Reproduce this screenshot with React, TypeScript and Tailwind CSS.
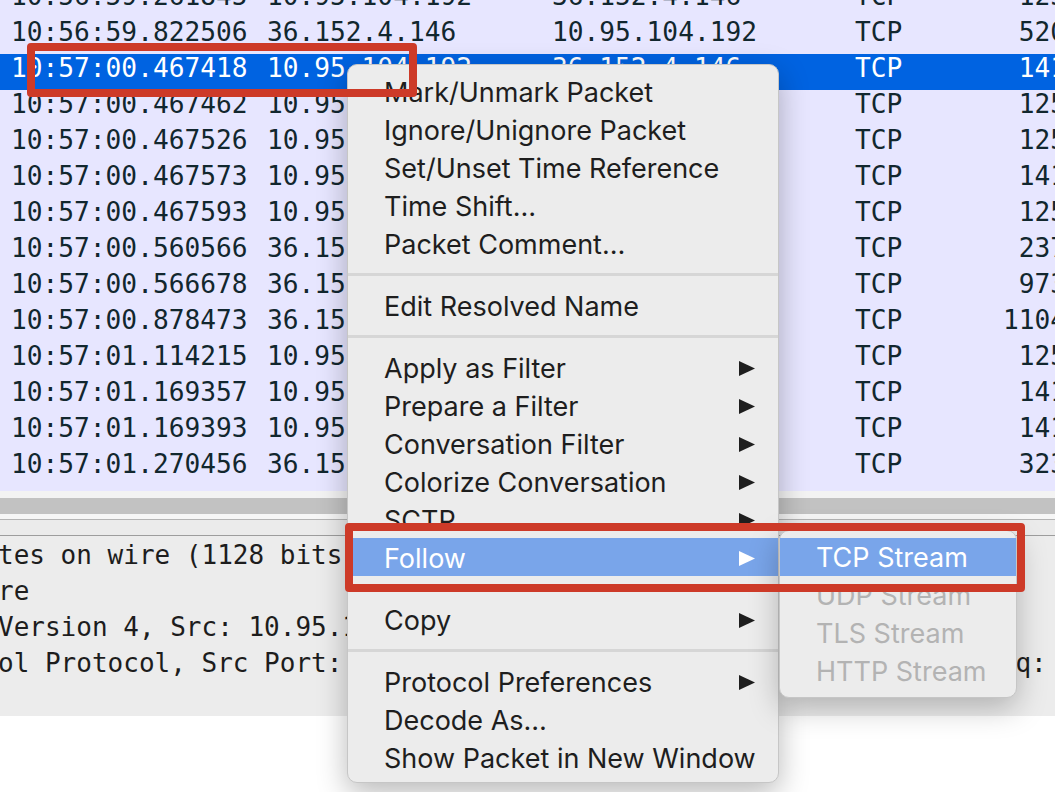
import React from 'react';

type Packet = {
  time: string;
  src: string;
  dst: string;
  proto: string;
  len: string;
  selected?: boolean;
};

const A = '10.95.104.192';
const B = '36.152.4.146';

const packets: Packet[] = [
  { time: '10:56:59.261845', src: A, dst: B, proto: 'TCP', len: '125' },
  { time: '10:56:59.822506', src: B, dst: A, proto: 'TCP', len: '520' },
  { time: '10:57:00.467418', src: A, dst: B, proto: 'TCP', len: '141', selected: true },
  { time: '10:57:00.467462', src: A, dst: B, proto: 'TCP', len: '125' },
  { time: '10:57:00.467526', src: A, dst: B, proto: 'TCP', len: '125' },
  { time: '10:57:00.467573', src: A, dst: B, proto: 'TCP', len: '141' },
  { time: '10:57:00.467593', src: A, dst: B, proto: 'TCP', len: '125' },
  { time: '10:57:00.560566', src: B, dst: A, proto: 'TCP', len: '237' },
  { time: '10:57:00.566678', src: B, dst: A, proto: 'TCP', len: '973' },
  { time: '10:57:00.878473', src: B, dst: A, proto: 'TCP', len: '1104' },
  { time: '10:57:01.114215', src: A, dst: B, proto: 'TCP', len: '125' },
  { time: '10:57:01.169357', src: A, dst: B, proto: 'TCP', len: '141' },
  { time: '10:57:01.169393', src: A, dst: B, proto: 'TCP', len: '141' },
  { time: '10:57:01.270456', src: B, dst: A, proto: 'TCP', len: '323' },
];

const details = [
  'tes on wire (1128 bits), 141 bytes captured (1128 bits)',
  're',
  'Version 4, Src: 10.95.104.192, Dst: 36.152.4.146',
  'ol Protocol, Src Port: 5821, Dst Port: 443, [Stream index: 0], Seq: 1',
];

type MenuEntry =
  | { kind: 'sep' }
  | { kind: 'item'; label: string; sub?: boolean; active?: boolean };

const menu: MenuEntry[] = [
  { kind: 'item', label: 'Mark/Unmark Packet' },
  { kind: 'item', label: 'Ignore/Unignore Packet' },
  { kind: 'item', label: 'Set/Unset Time Reference' },
  { kind: 'item', label: 'Time Shift…' },
  { kind: 'item', label: 'Packet Comment…' },
  { kind: 'sep' },
  { kind: 'item', label: 'Edit Resolved Name' },
  { kind: 'sep' },
  { kind: 'item', label: 'Apply as Filter', sub: true },
  { kind: 'item', label: 'Prepare a Filter', sub: true },
  { kind: 'item', label: 'Conversation Filter', sub: true },
  { kind: 'item', label: 'Colorize Conversation', sub: true },
  { kind: 'item', label: 'SCTP', sub: true },
  { kind: 'item', label: 'Follow', sub: true, active: true },
  { kind: 'sep' },
  { kind: 'item', label: 'Copy', sub: true },
  { kind: 'sep' },
  { kind: 'item', label: 'Protocol Preferences', sub: true },
  { kind: 'item', label: 'Decode As…' },
  { kind: 'item', label: 'Show Packet in New Window' },
];

const followItems = [
  { label: 'TCP Stream', active: true },
  { label: 'UDP Stream', disabled: true },
  { label: 'TLS Stream', disabled: true },
  { label: 'HTTP Stream', disabled: true },
];

function Arrow({ white }: { white?: boolean }) {
  return (
    <svg width="16" height="15" viewBox="0 0 16 15" className="shrink-0 -mt-[2px]">
      <polygon points="0,0 16,7.5 0,15" fill={white ? '#ffffff' : '#1e1e1e'} />
    </svg>
  );
}

export default function App() {
  return (
    <div className="relative w-[1055px] h-[792px] overflow-hidden bg-white">
      {/* packet list */}
      <div className="h-[491px] overflow-hidden bg-[#e7e6ff] font-['DejaVu_Sans_Mono',monospace] text-[26.2px]">
        <div className="-mt-[18px]">
          {packets.map(p => (
            <div
              key={p.time}
              className={`flex h-[36px] leading-[29px] pl-[11px] whitespace-nowrap ${
                p.selected ? 'bg-[#0063e1] text-white' : 'text-[#12272e]'
              }`}
            >
              <span className="w-[256px] shrink-0">{p.time}</span>
              <span className="w-[285px] shrink-0">{p.src}</span>
              <span className="w-[303px] shrink-0">{p.dst}</span>
              <span className="w-[120px] shrink-0">{p.proto}</span>
              <span className="w-[91px] shrink-0 text-right">{p.len}</span>
            </div>
          ))}
        </div>
      </div>

      {/* horizontal scrollbar + splitter */}
      <div className="h-[7px] bg-[#f3f3f3]" />
      <div className="h-[16px] bg-[#c2c2c2]" />
      <div className="h-[5px] bg-[#f6f6f6]" />
      <div className="h-px bg-[#b4b4b4]" />
      <div className="h-[15px] bg-[#ebebeb]" />
      <div className="h-px bg-[#9d9d9d]" />

      {/* packet details */}
      <div className="h-[180px] pt-[1px] bg-[#ececec] font-['DejaVu_Sans_Mono',monospace] text-[26px] text-[#1d1d1d]">
        {details.map(d => (
          <div key={d} className="h-[36px] leading-[36px] -ml-[2px] whitespace-nowrap">
            {d}
          </div>
        ))}
      </div>

      {/* context menu */}
      <div className="absolute left-[347px] top-[64px] w-[432px] pt-[7px] pb-[6px] rounded-[10px] bg-[#ececec] border border-[#c6c6c6] shadow-[0_10px_30px_rgba(0,0,0,0.28)] font-['Inter',sans-serif] text-[27px] text-[#1e1e1e]">
        {menu.map((m, i) =>
          m.kind === 'sep' ? (
            <div key={i} className="h-[24px] flex items-center">
              <div className="h-[3px] w-full bg-[#d6d6d6]" />
            </div>
          ) : (
            <div
              key={i}
              className={`h-[38px] flex items-center justify-between pt-[4px] pl-[36px] pr-[23px] ${
                m.active ? 'bg-[#79a5ea] text-white' : ''
              }`}
            >
              <span className="whitespace-nowrap">{m.label}</span>
              {m.sub && <Arrow white={m.active} />}
            </div>
          )
        )}
      </div>

      {/* Follow submenu */}
      <div className="absolute left-[779px] top-[530px] w-[238px] pt-[7px] pb-[7px] rounded-[10px] bg-[#ececec] border border-[#c6c6c6] shadow-[0_10px_30px_rgba(0,0,0,0.25)] font-['Inter',sans-serif] text-[27px]">
        {followItems.map(f => (
          <div
            key={f.label}
            className={`h-[38px] flex items-center pt-[2px] pl-[36px] whitespace-nowrap ${
              f.active ? 'bg-[#79a5ea] text-white' : f.disabled ? 'text-[#b3b3b3]' : 'text-[#1e1e1e]'
            }`}
          >
            {f.label}
          </div>
        ))}
      </div>

      {/* annotation boxes */}
      <div className="absolute left-[27px] top-[43px] w-[390px] h-[54px] border-[8px] border-[#cd3a28] rounded-[4px]" />
      <div className="absolute left-[345px] top-[523px] w-[680px] h-[69px] border-[8px] border-[#cd3a28] rounded-[4px]" />
    </div>
  );
}
